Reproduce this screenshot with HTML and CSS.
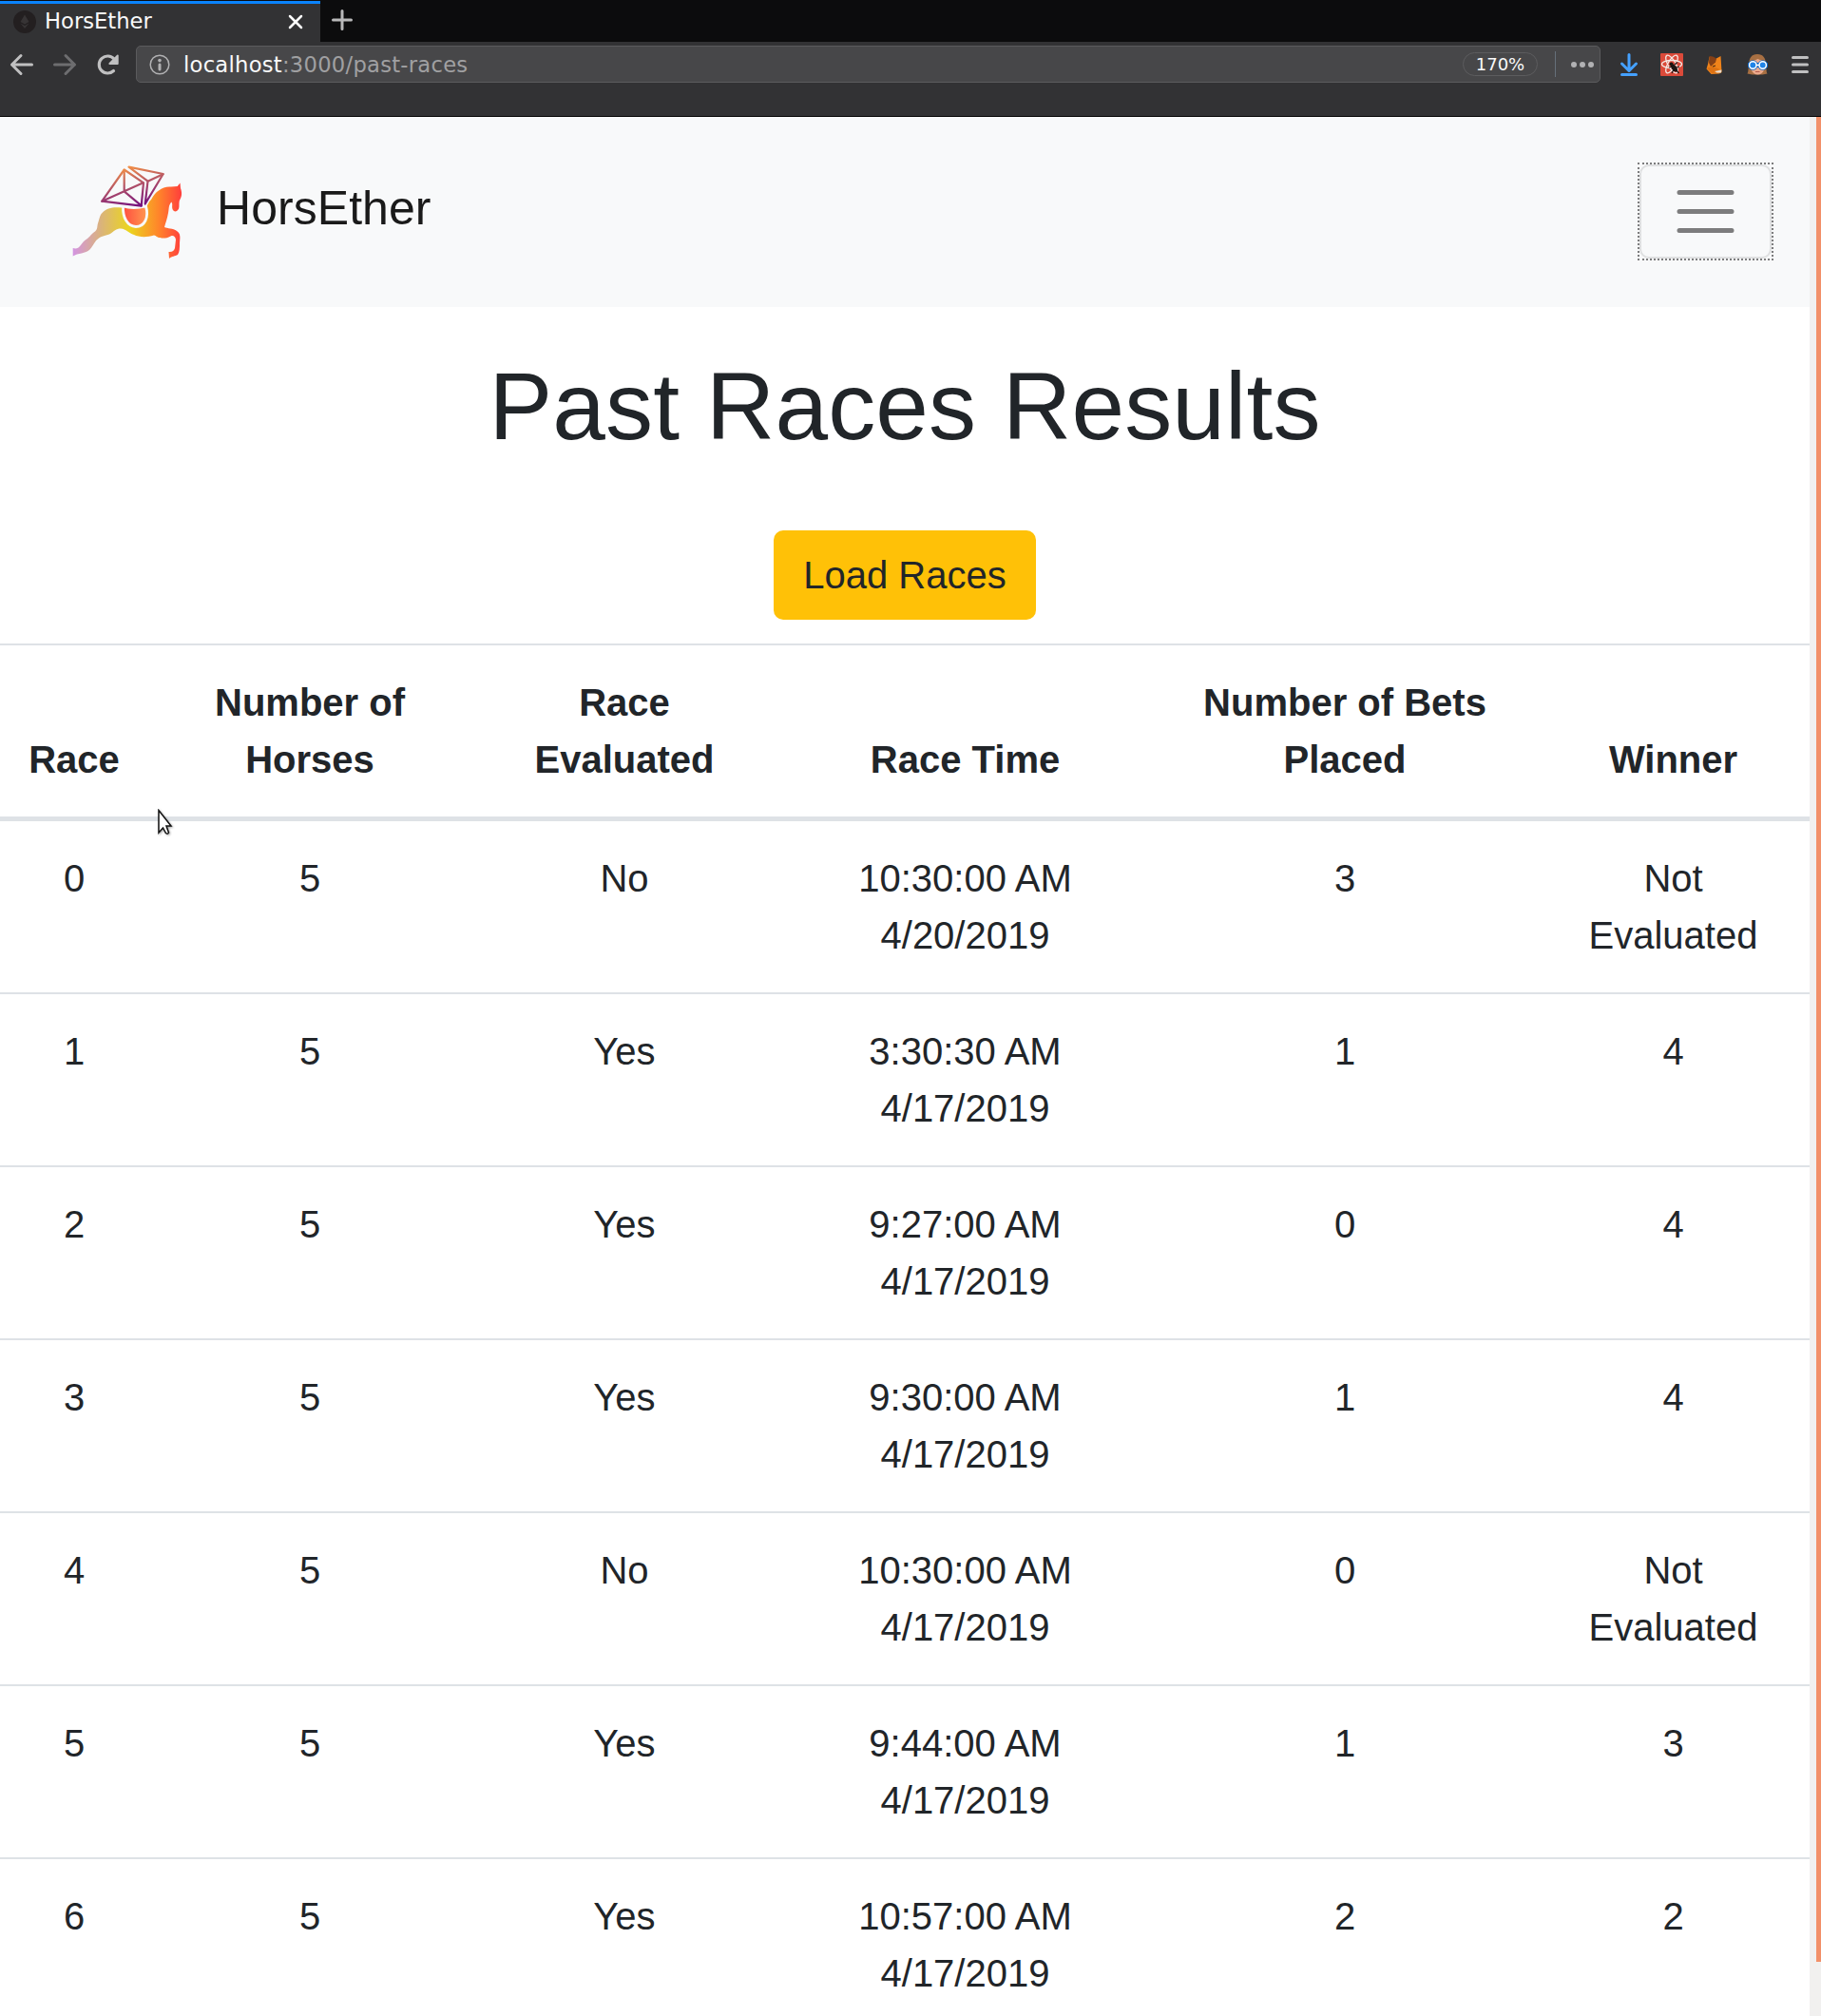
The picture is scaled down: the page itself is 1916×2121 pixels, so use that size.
FILE: index.html
```html
<!DOCTYPE html>
<html lang="en">
<head>
<meta charset="utf-8">
<title>HorsEther</title>
<link rel="stylesheet" href="styles.css">
</head>
<body>
<header class="chrome">
  <div class="tabs">
    <div class="tab">
      <svg class="favicon" viewBox="0 0 24 24"><circle cx="12" cy="12" r="12" fill="#231f20"/><path d="M12 4.500 7.500 12l4.500 2.600 4.500-2.600zM7.500 13.500l4.500 5.500 4.500-5.500-4.500 2.500z" fill="#373435"/></svg>
      <span class="tab-title">HorsEther</span>
      <svg class="tab-close" viewBox="0 0 16 16"><path d="M2 2l12 12M14 2 2 14" stroke="#fff" stroke-width="2.500" stroke-linecap="round"/></svg>
    </div>
    <svg class="new-tab" viewBox="0 0 22 22"><path d="M11 1.500v19M1.500 11h19" stroke="#b9b9ba" stroke-width="3" stroke-linecap="round"/></svg>
  </div>
  <div class="toolbar">
    <svg class="nav-icons" viewBox="0 0 143 78" fill="none" stroke-linecap="round" stroke-linejoin="round" stroke-width="3">
      <path d="M33.500 24H12.500M22 14.500 12.500 24l9.500 9.500" stroke="#c0c0c1"/>
      <path d="M57.500 24h21M69 14.500l9.500 9.500-9.500 9.500" stroke="#6d6d6f"/>
      <path d="M119.500 30.500A9 9 0 1 1 120 18" stroke="#c0c0c1" stroke-width="3.200"/>
      <path d="M123.800 14.500v8.500h-8.500z" fill="#c0c0c1" stroke="#c0c0c1" stroke-width="1.800"/>
    </svg>
    <div class="urlbar">
      <svg class="info" viewBox="0 0 22 22"><circle cx="11" cy="11" r="9.800" fill="none" stroke="#b1b1b3" stroke-width="1.500"/><circle cx="11" cy="6.600" r="1.800" fill="#b1b1b3"/><path d="M11 11v5" stroke="#b1b1b3" stroke-width="3" stroke-linecap="round"/></svg>
      <span class="url"><b>localhost</b>:3000/past-races</span>
      <span class="zoom">170%</span>
      <span class="divider"></span>
      <svg class="dots" viewBox="0 0 24 6"><g fill="#b1b1b3"><circle cx="3" cy="3" r="3"/><circle cx="12" cy="3" r="3"/><circle cx="21" cy="3" r="3"/></g></svg>
    </div>
    <svg class="actions" viewBox="1685 44 231 78" fill="none">
      <path d="M1714 57.500v17M1706.500 67l7.500 7.500 7.500-7.500M1706.500 78.500h15" stroke="#45a1ff" stroke-width="3" stroke-linecap="round" stroke-linejoin="round"/>
      <rect x="1747" y="56" width="24" height="24" rx="1" fill="#db4a3a"/>
      <g stroke="#f3e8e4" stroke-width="1.300"><ellipse cx="1759" cy="67.500" rx="10.500" ry="4"/><ellipse cx="1759" cy="67.500" rx="10.500" ry="4" transform="rotate(60 1759 67.500)"/><ellipse cx="1759" cy="67.500" rx="10.500" ry="4" transform="rotate(120 1759 67.500)"/></g>
      <ellipse cx="1761.500" cy="71.500" rx="2.600" ry="4.500" transform="rotate(-35 1761.500 71.500)" fill="#1d1412"/>
      <circle cx="1758.500" cy="67.500" r="2" fill="#1d1412"/>
      <path d="M1756 71l4-1M1759 77l2-4M1762 68l3-2.500M1764 71l3-1M1764 74l2.500 3" stroke="#1d1412" stroke-width="1.200"/>
      <path d="M1798.500 60l6.500 2 5.500-3 .800 13 .200 4-2.500 1.500-8.500 .500-5-5.500 1.500-5z" fill="#f0831a"/>
      <path d="M1798.500 59c3 0 6 1 7.500 3l-1 3.500-5 4.500-2-4z" fill="#854016"/>
      <path d="M1796 71.500l6-1.500 7 2.500-3 4-5 .500z" fill="#dd7213"/>
      <path d="M1802 70l3-1" stroke="#4a2a14" stroke-width="1.200"/>
      <path d="M1804 75l7.500-1.500-.500 3h-4.500z" fill="#e9dccb"/>
      <path d="M1838.500 77.500c3-4-2-20.500 10.500-20.500s8 16.500 10.500 20.500l-5 1h-11z" fill="#a87043"/>
      <path d="M1841.500 65c4-1 6-2 8-3 2 1 5 2 7.500 3 .500 8-2 13.500-7.500 13.500s-8.500-6-8-13.500z" fill="#eba98b"/>
      <path d="M1839 68.500h21" stroke="#0b65c4" stroke-width="5"/>
      <circle cx="1844.300" cy="68.500" r="5.200" fill="#0b65c4"/><circle cx="1854.700" cy="68.500" r="5.200" fill="#0b65c4"/>
      <circle cx="1844.300" cy="68.500" r="3.700" fill="#1f84e8" stroke="#fff" stroke-width="1.500"/>
      <circle cx="1854.700" cy="68.500" r="3.700" fill="#1f84e8" stroke="#fff" stroke-width="1.500"/>
      <path d="M1848 68.500h3" stroke="#fff" stroke-width="1.500"/><path d="M1847 75.500h4.500" stroke="#b35a4c"/>
      <path d="M1886.500 60.500h15M1886.500 68h15M1886.500 75.500h15" stroke="#c0c0c1" stroke-width="3" stroke-linecap="round"/>
    </svg>
  </div>
</header>
<div class="viewport">
  <div class="page">
    <nav class="navbar">
      <div class="brand">
        <svg class="logo" viewBox="0 0 117 100" fill="none">
          <defs>
            <linearGradient id="coat" gradientUnits="userSpaceOnUse" x1="0" y1="0" x2="116" y2="0"><stop offset="0" stop-color="#d394e4"/><stop offset=".26" stop-color="#dab37c"/><stop offset=".52" stop-color="#ebd51e"/><stop offset=".78" stop-color="#ff862a"/><stop offset="1" stop-color="#ff3b3d"/></linearGradient>
            <linearGradient id="gem" gradientUnits="userSpaceOnUse" x1="58" y1="0" x2="68" y2="43"><stop offset="0" stop-color="#f79443"/><stop offset=".5" stop-color="#b05068"/><stop offset="1" stop-color="#74107e"/></linearGradient>
            <linearGradient id="saddle" x1="0" x2="1"><stop offset="0" stop-color="#ff4d3f"/><stop offset="1" stop-color="#ff9850"/></linearGradient>
          </defs>
          <path d="M.700 87Q4 88 6.500 86.500C9 85 10 81 14.500 78C19 75 20 72 24 69.500C27 67 26 64 27 61C29 55 29 52 32 49.500C36 45 43 43.500 51.500 44.500L77 45C80 41 80 39 83 36C86 31 88 28 91 26.500C95 23.500 99 22 104 22.500L110.700 22Q112 20 113.500 18.500L114 24C116 30 115 33 112.800 37C112 41 113 44 111.800 46C110 49.500 106.500 49 105.500 46C104.500 43 106 41 104.500 38.500C101 42 102 46 101 50C100 56 98 61 97 65C100 66.500 106 66 110 69C115 72 113 78 113 82C113 87 113 91 111 94C108 96 105 95 102 98L101.500 91C105 91.500 107.500 89.500 108 87L109 78C108 74 106 73.500 103.500 74.500C99 77 95 77 92.500 76C89 76 88.500 74 86 73.500C78 76 70 75.500 65 73C59 71 57 67 51 66.500C46 66.500 44 69 40 72C35 74 31 74 27.500 77C24 79 22 85 18.500 88.500C14 93 6 92 .700 95.500Z" fill="url(#coat)"/>
          <path d="M53.500 43C53 55 58 64 67 64.500C76 64.500 81 55 77.500 43Q64 46 53.500 43Z" fill="url(#saddle)" stroke="#f8f9fa" stroke-width="2.800"/>
          <g stroke="url(#gem)" stroke-width="2.200" stroke-linejoin="round" stroke-linecap="round"><path d="M54.700 4.500 31.300 37.700 72.700 42.700 75 18.300Z"/><path d="M54.700 5V27.300L31.300 37.700M54.700 27.300l20-9M54.700 27.300l18 15"/><path d="M59.500 1.700 95.700 9 76.700 40.500 79.500 16.700Z"/><path d="M79.500 16.700l16-7.500"/></g>
        </svg>
        <span class="brand-name">HorsEther</span>
      </div>
      <button class="toggler" aria-label="Toggle navigation"><svg viewBox="0 0 75 75"><path d="M10 17.500h55M10 37.500h55M10 57.500h55" stroke="#7c7c7d" stroke-width="5" stroke-linecap="round"/></svg></button>
    </nav>
    <main>
      <h1>Past Races Results</h1>
      <button class="load">Load Races</button>
      <table class="races">
        <colgroup><col class="c-race"><col class="c-horses"><col class="c-eval"><col class="c-time"><col class="c-bets"><col class="c-winner"></colgroup>
        <thead><tr><th>Race</th><th>Number of<br>Horses</th><th>Race<br>Evaluated</th><th>Race Time</th><th>Number of Bets<br>Placed</th><th>Winner</th></tr></thead>
        <tbody>
          <tr><td>0</td><td>5</td><td>No</td><td>10:30:00 AM<br>4/20/2019</td><td>3</td><td>Not<br>Evaluated</td></tr>
          <tr><td>1</td><td>5</td><td>Yes</td><td>3:30:30 AM<br>4/17/2019</td><td>1</td><td>4</td></tr>
          <tr><td>2</td><td>5</td><td>Yes</td><td>9:27:00 AM<br>4/17/2019</td><td>0</td><td>4</td></tr>
          <tr><td>3</td><td>5</td><td>Yes</td><td>9:30:00 AM<br>4/17/2019</td><td>1</td><td>4</td></tr>
          <tr><td>4</td><td>5</td><td>No</td><td>10:30:00 AM<br>4/17/2019</td><td>0</td><td>Not<br>Evaluated</td></tr>
          <tr><td>5</td><td>5</td><td>Yes</td><td>9:44:00 AM<br>4/17/2019</td><td>1</td><td>3</td></tr>
          <tr><td>6</td><td>5</td><td>Yes</td><td>10:57:00 AM<br>4/17/2019</td><td>2</td><td>2</td></tr>
        </tbody>
      </table>
    </main>
  </div>
  <div class="scrollbar"><div class="thumb"></div></div>
</div>
<svg class="cursor" viewBox="0 0 16 28"><path d="M1 1.500V25l4.500-5 3 5.500q2 1.500 3-.500L9 18H14Z" fill="#fff" stroke="#111" stroke-width="1.500"/></svg>
</body>
</html>
```
FILE: styles.css
```css
* { box-sizing: border-box; }
html, body { margin: 0; height: 2121px; overflow: hidden; }
body {
  display: flex;
  flex-direction: column;
  background: #fff;
  color: #212529;
  font: 40px/60px "Liberation Sans", Arial, sans-serif;
}
svg { display: block; flex: none; }

/* Browser window */
.chrome {
  flex: none;
  height: 123px;
  background: #323234;
  border-bottom: 1px solid #050505;
  font-family: "DejaVu Sans", sans-serif;
  font-size: 22.67px;
}
.tabs { display: flex; height: 44px; background: #0c0c0d; }
.tab {
  display: flex;
  align-items: center;
  width: 337px;
  padding: 0 18px 0 14px;
  background: linear-gradient(#0c0c0d 1px, #0a84ff 1px, #0a84ff 4px, #323234 4px);
}
.favicon { width: 24px; height: 24px; margin-top: 2px; }
.tab-title { flex: 1; margin-left: 9px; line-height: 44px; color: #f9f9fa; }
.tab-close { width: 16px; height: 16px; margin-top: 2px; }
.new-tab { width: 22px; height: 22px; margin: 10px 0 0 12px; }
.toolbar { display: flex; height: 78px; }
.nav-icons { width: 143px; height: 78px; }
.urlbar {
  display: flex;
  align-items: center;
  width: 1541px;
  height: 39px;
  margin: 4px 1px 0 0;
  padding: 0 6px 0 13px;
  background: #474749;
  border: 1px solid #5b5b5d;
  border-radius: 5px;
}
.info { width: 22px; height: 22px; }
.url { flex: 1; margin-left: 14px; padding-top: 1px; line-height: 37px; letter-spacing: .25px; color: #a0a0a2; }
.url b { font-weight: 400; color: #f9f9fa; }
.zoom {
  width: 79px;
  height: 25px;
  border: 1px solid #5c5c5e;
  border-radius: 13px;
  color: #f9f9fa;
  font-size: 18px;
  line-height: 23px;
  text-align: center;
}
.divider { width: 1px; height: 27px; margin: 0 16px 0 18px; background: #66707a; }
.dots { width: 24px; height: 6px; }
.actions { width: 231px; height: 78px; }

/* Page */
.viewport { display: flex; flex: 1; min-height: 0; }
.page { width: 1904px; overflow: hidden; }
.navbar {
  display: flex;
  justify-content: space-between;
  align-items: center;
  height: 200px;
  padding: 0 38px 0 76px;
  background: #f8f9fa;
}
.brand { display: flex; align-items: center; gap: 35px; }
.logo { width: 117px; height: 100px; margin-top: 1px; }
.brand-name { font-size: 50px; line-height: 75px; margin-top: -7px; letter-spacing: .05px; color: #1a1a1a; }
/* The dotted focus ring is square, so it is the button's own border and the rounded frame sits inside it. */
.toggler {
  width: 143px;
  height: 103px;
  margin-top: -1px;
  padding: 0;
  background: none;
  border: 2px dotted #7c7c7d;
}
.toggler svg {
  width: 139px;
  height: 99px;
  padding: 10px 30px;
  border: 2px solid #dfe0e1;
  border-radius: 10px;
}
main { display: flex; flex-direction: column; align-items: center; }
h1 { margin: 44px 0 71px; font-size: 100px; line-height: 120px; font-weight: 400; letter-spacing: .14px; }
.load {
  width: 276px;
  height: 94px;
  padding: 0;
  background: #ffc107;
  border: 0;
  border-radius: 10px;
  color: #212529;
  font: inherit;
}
.races {
  width: 1904px;
  margin-top: 25px;
  table-layout: fixed;
  border-spacing: 0;
  text-align: center;
}
.c-race { width: 155px; }
.c-horses { width: 341px; }
.c-eval { width: 321px; }
.c-time { width: 396px; }
.c-bets { width: 403px; }
.c-winner { width: 288px; }
th, td { padding: 30px 0 30px 1px; border-top: 2px solid #dee2e6; vertical-align: top; }
th { vertical-align: bottom; border-bottom: 5px solid #dee2e6; }
tbody tr:first-child td { border-top: 0; }
.scrollbar { width: 12px; padding-left: 7px; background: #f1f0ef; }
.thumb { height: 1941px; background: #f29069; }
.cursor { position: absolute; left: 166px; top: 851px; width: 16px; height: 28px; filter: drop-shadow(1px 1px 1px rgba(0, 0, 0, .35)); }
```
